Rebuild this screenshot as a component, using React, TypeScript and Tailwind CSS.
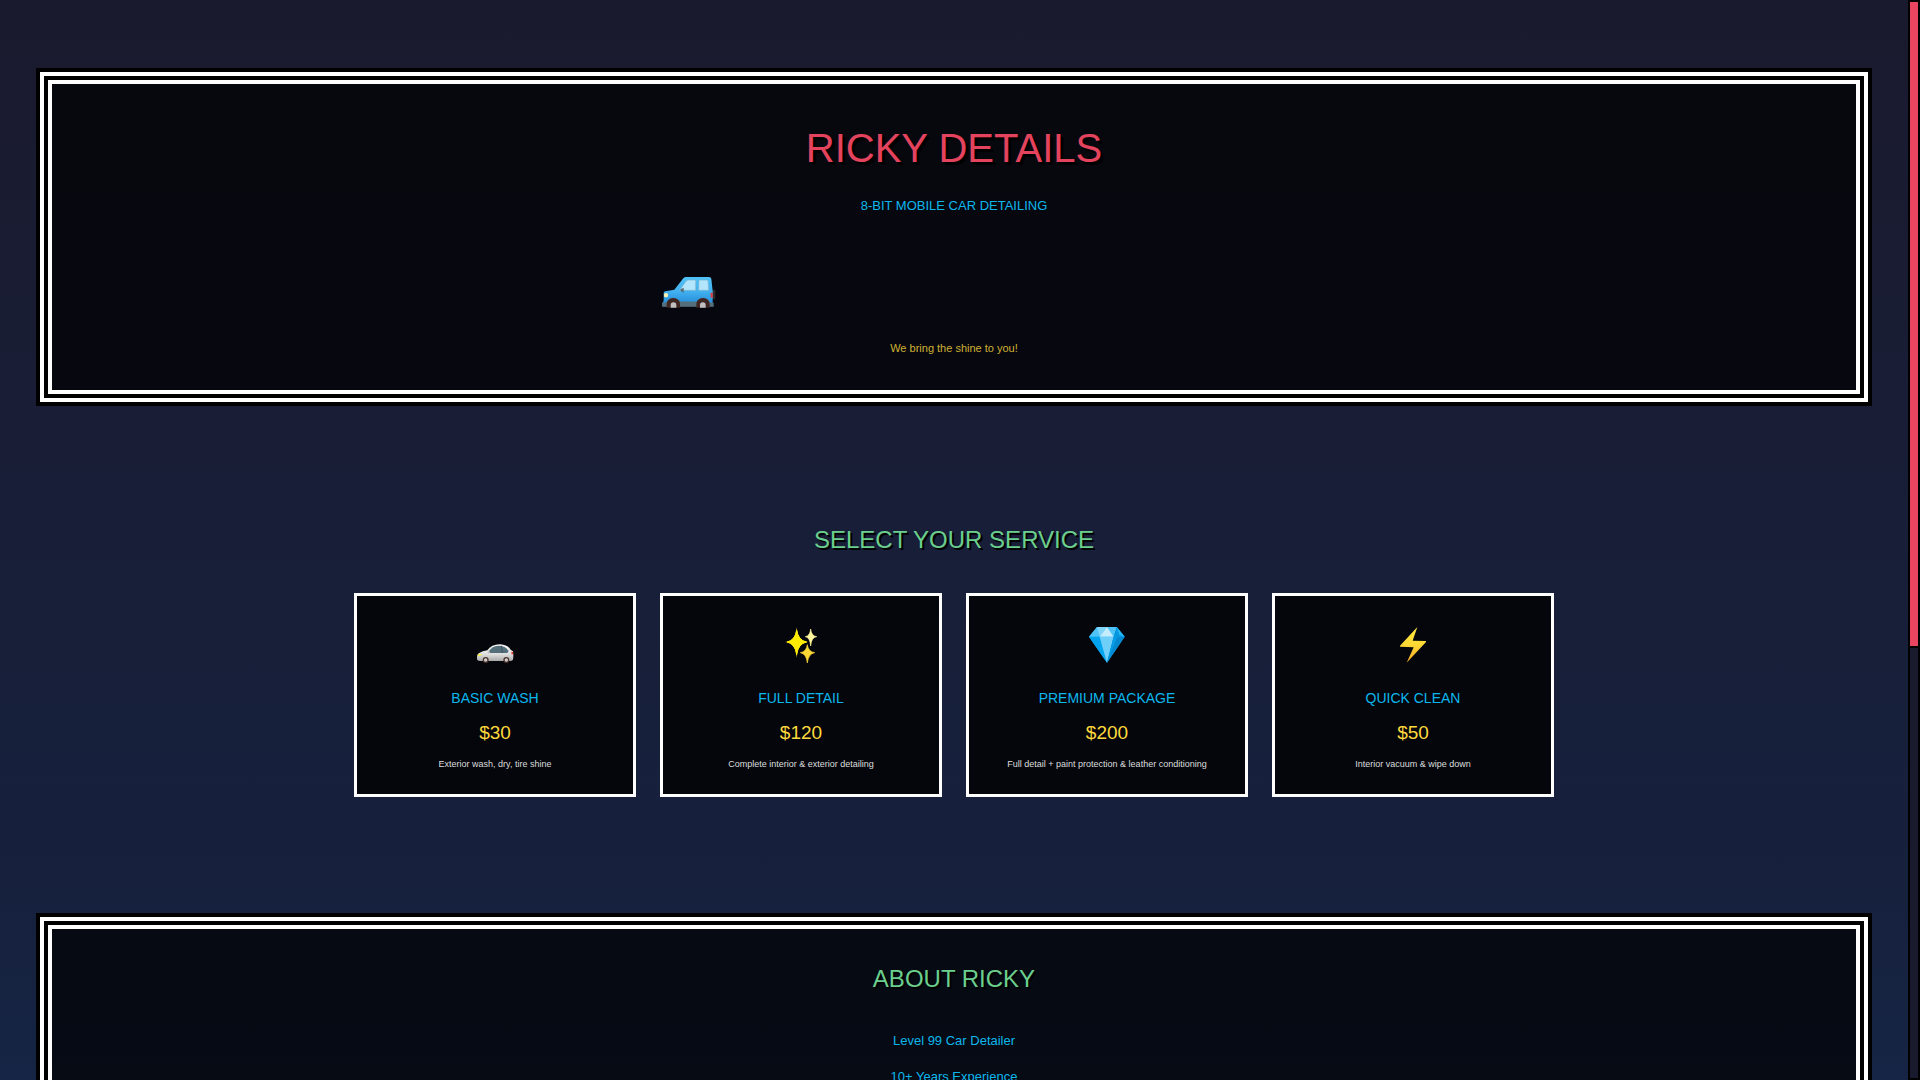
import type { ReactNode } from "react";

type Service = {
  icon: ReactNode;
  name: string;
  price: string;
  description: string;
};

function TruckIcon() {
  return (
    <svg viewBox="0 0 162 93" width="54" height="31" aria-hidden="true">
      <defs>
        <linearGradient id="truck" x1="0" y1="0" x2="0" y2="1">
          <stop offset="0" stopColor="#4fc3f7" />
          <stop offset="0.5" stopColor="#42b0f0" />
          <stop offset="1" stopColor="#1e84d4" />
        </linearGradient>
      </defs>
      <rect x="148" y="38" width="12" height="29" rx="3" fill="#2b2b2b" />
      <path d="M5 48Q5 44 10 43L37 38L64 4Q67 0 73 0H141Q147 0 148 6L152 42V88H2V76L5 72Z" fill="url(#truck)" />
      <path d="M0 77Q60 70 155 77V89H0Z" fill="#546e7a" />
      <path d="M53 39L72 13Q75 9 79 9H101V40H56Z" fill="#b3e5fc" stroke="#82b4cb" strokeWidth="2" />
      <path d="M111 9H135Q138 9 138 12L140 40H110Z" fill="#b3e5fc" stroke="#82b4cb" strokeWidth="2" />
      <path d="M55 37L65 32V47L57 43Z" fill="#546e7a" />
      <rect x="6" y="48" width="12" height="13" rx="5" fill="#fff3b0" />
      <rect x="146" y="47" width="6" height="15" rx="2" fill="#e53935" />
      <path d="M10 88A24 26 0 0 1 58 88ZM99 88A24 26 0 0 1 147 88Z" fill="#546e7a" />
      <path d="M14 92V82A20 19 0 0 1 54 82V92ZM103 92V82A20 19 0 0 1 143 82V92Z" fill="#3e2723" />
      <path d="M26 92V84A8 8 0 0 1 43 84V92ZM114 92V84A8 8 0 0 1 131 84V92Z" fill="#c0c0c0" />
    </svg>
  );
}

function SedanIcon() {
  return (
    <svg viewBox="0 0 114 114" className="size-[38px]" aria-hidden="true">
      <defs>
        <linearGradient id="sedan" x1="0" y1="0" x2="0" y2="1">
          <stop offset="0" stopColor="#fafafa" />
          <stop offset="0.6" stopColor="#dedede" />
          <stop offset="1" stopColor="#a8a8a8" />
        </linearGradient>
      </defs>
      <path
        d="M3 96Q3 88 8 85Q20 78 34 76Q46 58 72 58Q94 59 104 74L111 79Q113 92 111 104Q109 108 100 108H12Q4 108 3 103Z"
        fill="url(#sedan)"
      />
      <path d="M37 82Q46 63 68 62Q88 62 98 78L94 84H40Z" fill="#546e7a" />
      <path d="M76 62L79 84" stroke="#37474f" strokeWidth="2" />
      <path d="M35 78Q41 76 42 83L38 86Q34 84 35 78Z" fill="#c4c4c4" />
      <path d="M6 88Q12 86 18 87Q14 94 5 93Z" fill="#ffee33" />
      <path d="M106 80L111 81V87L107 89Z" fill="#e53935" />
      <circle cx="29" cy="105" r="9" fill="#4e342e" />
      <circle cx="29" cy="105" r="5" fill="#d0d0d0" />
      <circle cx="91" cy="105" r="9" fill="#4e342e" />
      <circle cx="91" cy="105" r="5" fill="#d0d0d0" />
    </svg>
  );
}

function SparklesIcon() {
  return (
    <svg viewBox="0 0 114 114" className="size-[38px]" aria-hidden="true">
      <path d="M44 7Q47 48 78 51Q47 54 44 98Q41 54 10 51Q41 48 44 7Z" fill="#fdd835" />
      <path d="M44 15Q48 46 74 51Q48 56 44 89Q40 56 15 51Q40 46 44 15Z" fill="#ffeb00" stroke="#ffeb00" strokeWidth="3" />
      <path d="M86 12Q88 33 104 35Q88 37 86 63Q84 37 70 35Q84 33 86 12Z" fill="#fff59d" stroke="#fff59d" strokeWidth="2" />
      <path d="M76 59Q79 80 98 83Q79 86 76 114Q73 86 55 83Q73 80 76 59Z" fill="#fdd835" stroke="#fdd835" strokeWidth="2" />
    </svg>
  );
}

function DiamondIcon() {
  return (
    <svg viewBox="0 0 114 114" className="size-[38px]" aria-hidden="true">
      <path d="M27 6H86L110 35L57 113L3 35Z" fill="#29b6f6" />
      <path d="M27 6L3 35H35L31 14Z" fill="#4fc3f7" />
      <path d="M27 6H57L35 35Z" fill="#81d4fa" />
      <path d="M57 6H86L77 35Z" fill="#4fc3f7" />
      <path d="M86 6L110 35H77Z" fill="#0296dd" />
      <path d="M86 6L94 30L110 35Z" fill="#29b6f6" />
      <path d="M57 6L77 35H35Z" fill="#c5ecfd" />
      <path d="M3 35H35L57 113Z" fill="#03a3ee" />
      <path d="M35 35H77L57 113Z" fill="#6fcff9" />
      <path d="M77 35H110L57 113Z" fill="#0288d1" />
      <path d="M77 35L88 35L57 113Z" fill="#039be5" />
    </svg>
  );
}

function BoltIcon() {
  return (
    <svg viewBox="0 0 114 114" className="size-[38px]" aria-hidden="true">
      <defs>
        <linearGradient id="bolt" x1="0" y1="0" x2="0" y2="1">
          <stop offset="0" stopColor="#ffe93b" />
          <stop offset="0.5" stopColor="#fdd835" />
          <stop offset="1" stopColor="#f9a825" />
        </linearGradient>
      </defs>
      <path d="M70 6L18 62V65L59 67L38 113L96 51V48L56 47Z" fill="url(#bolt)" />
    </svg>
  );
}

const services: Service[] = [
  { icon: <SedanIcon />, name: "BASIC WASH", price: "$30", description: "Exterior wash, dry, tire shine" },
  { icon: <SparklesIcon />, name: "FULL DETAIL", price: "$120", description: "Complete interior & exterior detailing" },
  {
    icon: <DiamondIcon />,
    name: "PREMIUM PACKAGE",
    price: "$200",
    description: "Full detail + paint protection & leather conditioning",
  },
  { icon: <BoltIcon />, name: "QUICK CLEAN", price: "$50", description: "Interior vacuum & wipe down" },
];

const stats = ["Level 99 Car Detailer", "10+ Years Experience"];

function PixelFrame({ children }: { children: ReactNode }) {
  return (
    <div className="border-4 border-white bg-black/70 p-10 text-center shadow-[0_0_0_4px_#000,inset_0_0_0_4px_#000,inset_0_0_0_8px_#fff]">
      {children}
    </div>
  );
}

function ServiceCard({ service }: { service: Service }) {
  return (
    <article className="border-3 border-white bg-black/80 px-4 pt-6 pb-5.5 text-center">
      <div className="flex h-12 items-center justify-center">{service.icon}</div>
      <h3 className="mt-4 text-[14px] leading-7 text-[#0db7ed]">{service.name}</h3>
      <p className="mt-2 text-[19px] leading-[26px] text-[#ffd93d]">{service.price}</p>
      <p className="mt-2.5 text-[9px] leading-4 text-[#dddddd]">{service.description}</p>
    </article>
  );
}

function ScrollRail() {
  return (
    <div className="w-3 shrink-0 border-2 border-black bg-[#1a1a2e]" aria-hidden="true">
      <div className="h-[60%] border-b-2 border-black bg-[#e94560]" />
    </div>
  );
}

export default function App() {
  return (
    <div className="flex h-screen overflow-hidden bg-[#1a1a2e] font-['Liberation_Sans',Arial,sans-serif] text-white">
      <main className="min-w-0 flex-1 overflow-hidden bg-linear-to-b from-[#1a1a2e] via-[#16213e] to-[#0f3460] bg-[length:100%_167%] bg-no-repeat">
        <header className="px-10 pt-18">
          <PixelFrame>
            <h1 className="text-[40px] leading-16 text-[#e4435e] [text-shadow:3px_3px_0_#000]">RICKY DETAILS</h1>
            <p className="mt-4 text-[13px] leading-5 text-[#0db7ed]">8-BIT MOBILE CAR DETAILING</p>
            <div className="mx-auto mt-8 flex h-[66px] max-w-[600px] items-end pb-1.5 pl-2">
              <TruckIcon />
            </div>
            <p className="mt-6 text-[11px] leading-5 text-[#d0b135]">We bring the shine to you!</p>
          </PixelFrame>
        </header>

        <section className="px-10 pt-30">
          <h2 className="text-center text-[24px] leading-9 text-[#6bcf8e] [text-shadow:2px_2px_0_#000]">
            SELECT YOUR SERVICE
          </h2>
          <div className="mx-auto mt-[35px] grid max-w-[1200px] grid-cols-4 gap-6">
            {services.map((s) => (
              <ServiceCard key={s.name} service={s} />
            ))}
          </div>
        </section>

        <section className="px-10 pt-30">
          <PixelFrame>
            <h2 className="text-[24px] leading-9 text-[#6bcf8e] [text-shadow:2px_2px_0_#000]">ABOUT RICKY</h2>
            <ul className="mt-8 space-y-3 text-[13px] leading-6 text-[#0db7ed]">
              {stats.map((s) => (
                <li key={s}>{s}</li>
              ))}
            </ul>
          </PixelFrame>
        </section>
      </main>
      <ScrollRail />
    </div>
  );
}
